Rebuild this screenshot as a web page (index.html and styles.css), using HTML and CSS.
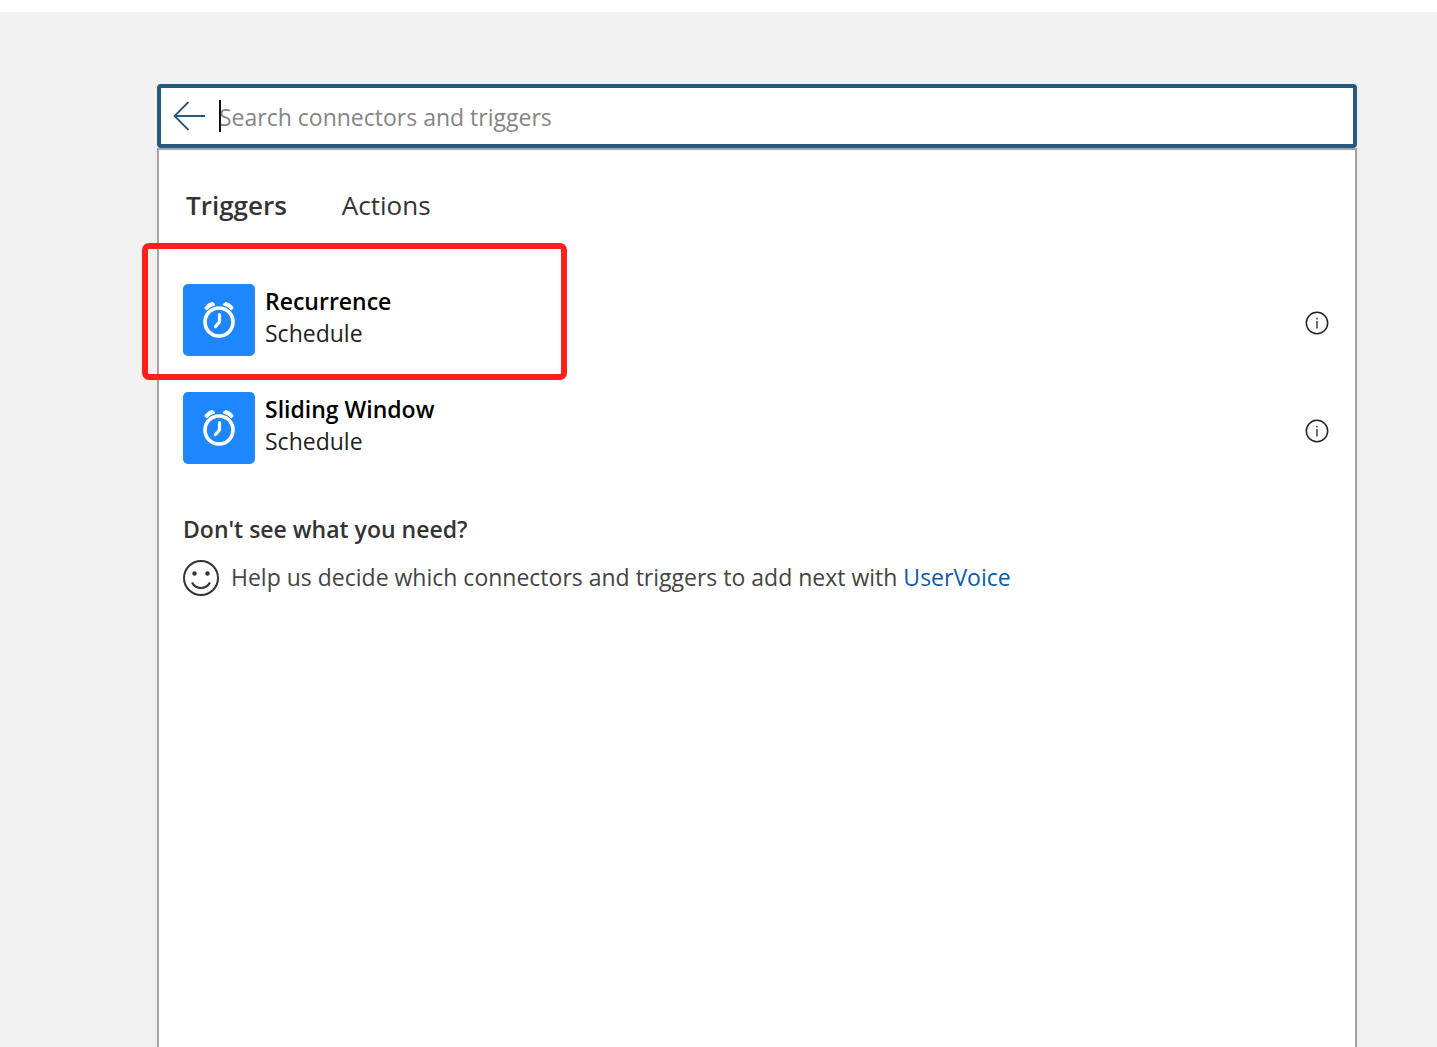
FILE: index.html
```html
<!DOCTYPE html>
<html lang="en">
<head>
<meta charset="utf-8">
<title>Choose a trigger</title>
<link rel="stylesheet" href="styles.css">
</head>
<body>
<svg class="sprite" aria-hidden="true">
  <symbol id="clock" viewBox="0 0 72 72">
    <g fill="none" stroke="#fff" stroke-linecap="round" stroke-linejoin="round">
      <circle cx="36" cy="38" r="14" stroke-width="3.6"/>
      <path d="M36.500 30.500v7.500l-4 4.500" stroke-width="3.200"/>
    </g>
    <path fill="#fff" stroke="#fff" stroke-linejoin="round" d="M21.800 24Q24.500 19 29.800 18.500L32 20.700Q27 22.300 23.600 26ZM50.200 24Q47.500 19 42.200 18.500L40 20.700Q45 22.300 48.400 26Z"/>
  </symbol>
  <symbol id="info" viewBox="0 0 24 24">
    <circle cx="12" cy="12" r="10.700" fill="none" stroke="#222" stroke-width="1.500"/>
    <path d="M12 10v7.500M12 6.800v1.700" stroke="#222" stroke-width="1.300"/>
  </symbol>
</svg>
<main class="page">
  <div class="search">
    <button class="back" type="button" aria-label="Back">
      <svg width="32" height="30" viewBox="0 0 32 30" fill="none" stroke="#25597c" stroke-width="1.800"><path d="M32 15H1.500M15.500 1L1.500 15l14 14"/></svg>
    </button>
    <div class="field">
      <input class="query" type="text" placeholder="Search connectors and triggers" aria-label="Search connectors and triggers">
      <span class="caret"></span>
    </div>
  </div>
  <section class="panel">
    <nav class="tabs">
      <button class="tab active" type="button">Triggers</button>
      <button class="tab" type="button">Actions</button>
    </nav>
    <ul class="list">
      <li class="row">
        <span class="tile"><svg width="72" height="72"><use href="#clock"/></svg></span>
        <div class="label"><strong class="name">Recurrence</strong><span class="group">Schedule</span></div>
        <button class="info" type="button" aria-label="About Recurrence"><svg width="24" height="24"><use href="#info"/></svg></button>
        <span class="highlight"></span>
      </li>
      <li class="row">
        <span class="tile"><svg width="72" height="72"><use href="#clock"/></svg></span>
        <div class="label"><strong class="name">Sliding Window</strong><span class="group">Schedule</span></div>
        <button class="info" type="button" aria-label="About Sliding Window"><svg width="24" height="24"><use href="#info"/></svg></button>
      </li>
    </ul>
    <h2 class="question">Don't see what you need?</h2>
    <div class="help">
      <svg width="36" height="36" viewBox="0 0 36 36" fill="none" stroke="#333" stroke-width="2"><circle cx="18" cy="18" r="17"/><path d="M9 22.500c4 7.300 14 7.300 18 0" stroke-width="2.200"/><g fill="#333" stroke="none"><circle cx="11.500" cy="13.500" r="2.200"/><circle cx="24.500" cy="13.500" r="2.200"/></g></svg>
      <p class="text">Help us decide which connectors and triggers to add next with <a class="link" href="#">UserVoice</a></p>
    </div>
  </section>
</main>
</body>
</html>
```
FILE: styles.css
```css
* {
  box-sizing: border-box;
}

body {
  margin: 0;
  min-height: 100vh;
  display: flex;
  flex-direction: column;
  border-top: 12px solid #fff;
  background: #f1f1f1;
  color: #333;
  font: 23px/32px "Open Sans", "Noto Sans", sans-serif;
}

button {
  padding: 0;
  border: 0;
  background: none;
  color: inherit;
  font: inherit;
}

svg {
  display: block;
  flex: none;
}

.sprite {
  position: absolute;
  width: 0;
  height: 0;
}

.page {
  flex: 1;
  display: flex;
  flex-direction: column;
  padding: 72px 80px 0 157px;
}

.search {
  display: flex;
  align-items: center;
  gap: 14px;
  height: 64px;
  padding: 0 12px;
  border: 4px solid #25597c;
  border-radius: 4px;
  background: #fff;
}

.field {
  position: relative;
  flex: 1;
}

.query {
  display: block;
  width: 100%;
  height: 36px;
  padding: 2px 0 0;
  border: 0;
  outline: 0;
  background: none;
  color: #333;
  font: inherit;
}

.query::placeholder {
  color: #858585;
}

.caret {
  position: absolute;
  top: 2px;
  left: 0;
  width: 2px;
  height: 32px;
  background: #111;
}

.panel {
  flex: 1;
  padding: 35px 24px 0;
  border: 2px solid #a3a3a3;
  border-bottom: 0;
  background: #fff;
}

.tabs {
  display: flex;
  gap: 55px;
  padding-left: 3px;
}

.tab {
  font-size: 26px;
  line-height: 40px;
}

.active {
  font-weight: 600;
}

.list {
  display: grid;
  gap: 36px;
  margin: 59px 0 49px;
  padding: 0;
  list-style: none;
}

.row {
  position: relative;
  display: flex;
  align-items: center;
  gap: 10px;
}

.tile {
  border-radius: 5px;
  background: #1e86ff;
}

.label {
  flex: 1;
  display: flex;
  flex-direction: column;
  padding-bottom: 6px;
  color: #222;
}

.name {
  color: #000;
  font-weight: 600;
}

.info {
  margin: 6px 2px 0 0;
}

.highlight {
  position: absolute;
  top: -41px;
  left: -41px;
  width: 425px;
  height: 137px;
  border: 6px solid #fc2018;
  border-radius: 7px;
}

.question {
  margin: 0 0 15px;
  font-size: 23px;
  font-weight: 600;
}

.help {
  display: flex;
  align-items: center;
  gap: 12px;
}

.text {
  margin: 0;
  padding-bottom: 2px;
  color: #444;
}

.link {
  color: #0b5cad;
  text-decoration: none;
}
```
